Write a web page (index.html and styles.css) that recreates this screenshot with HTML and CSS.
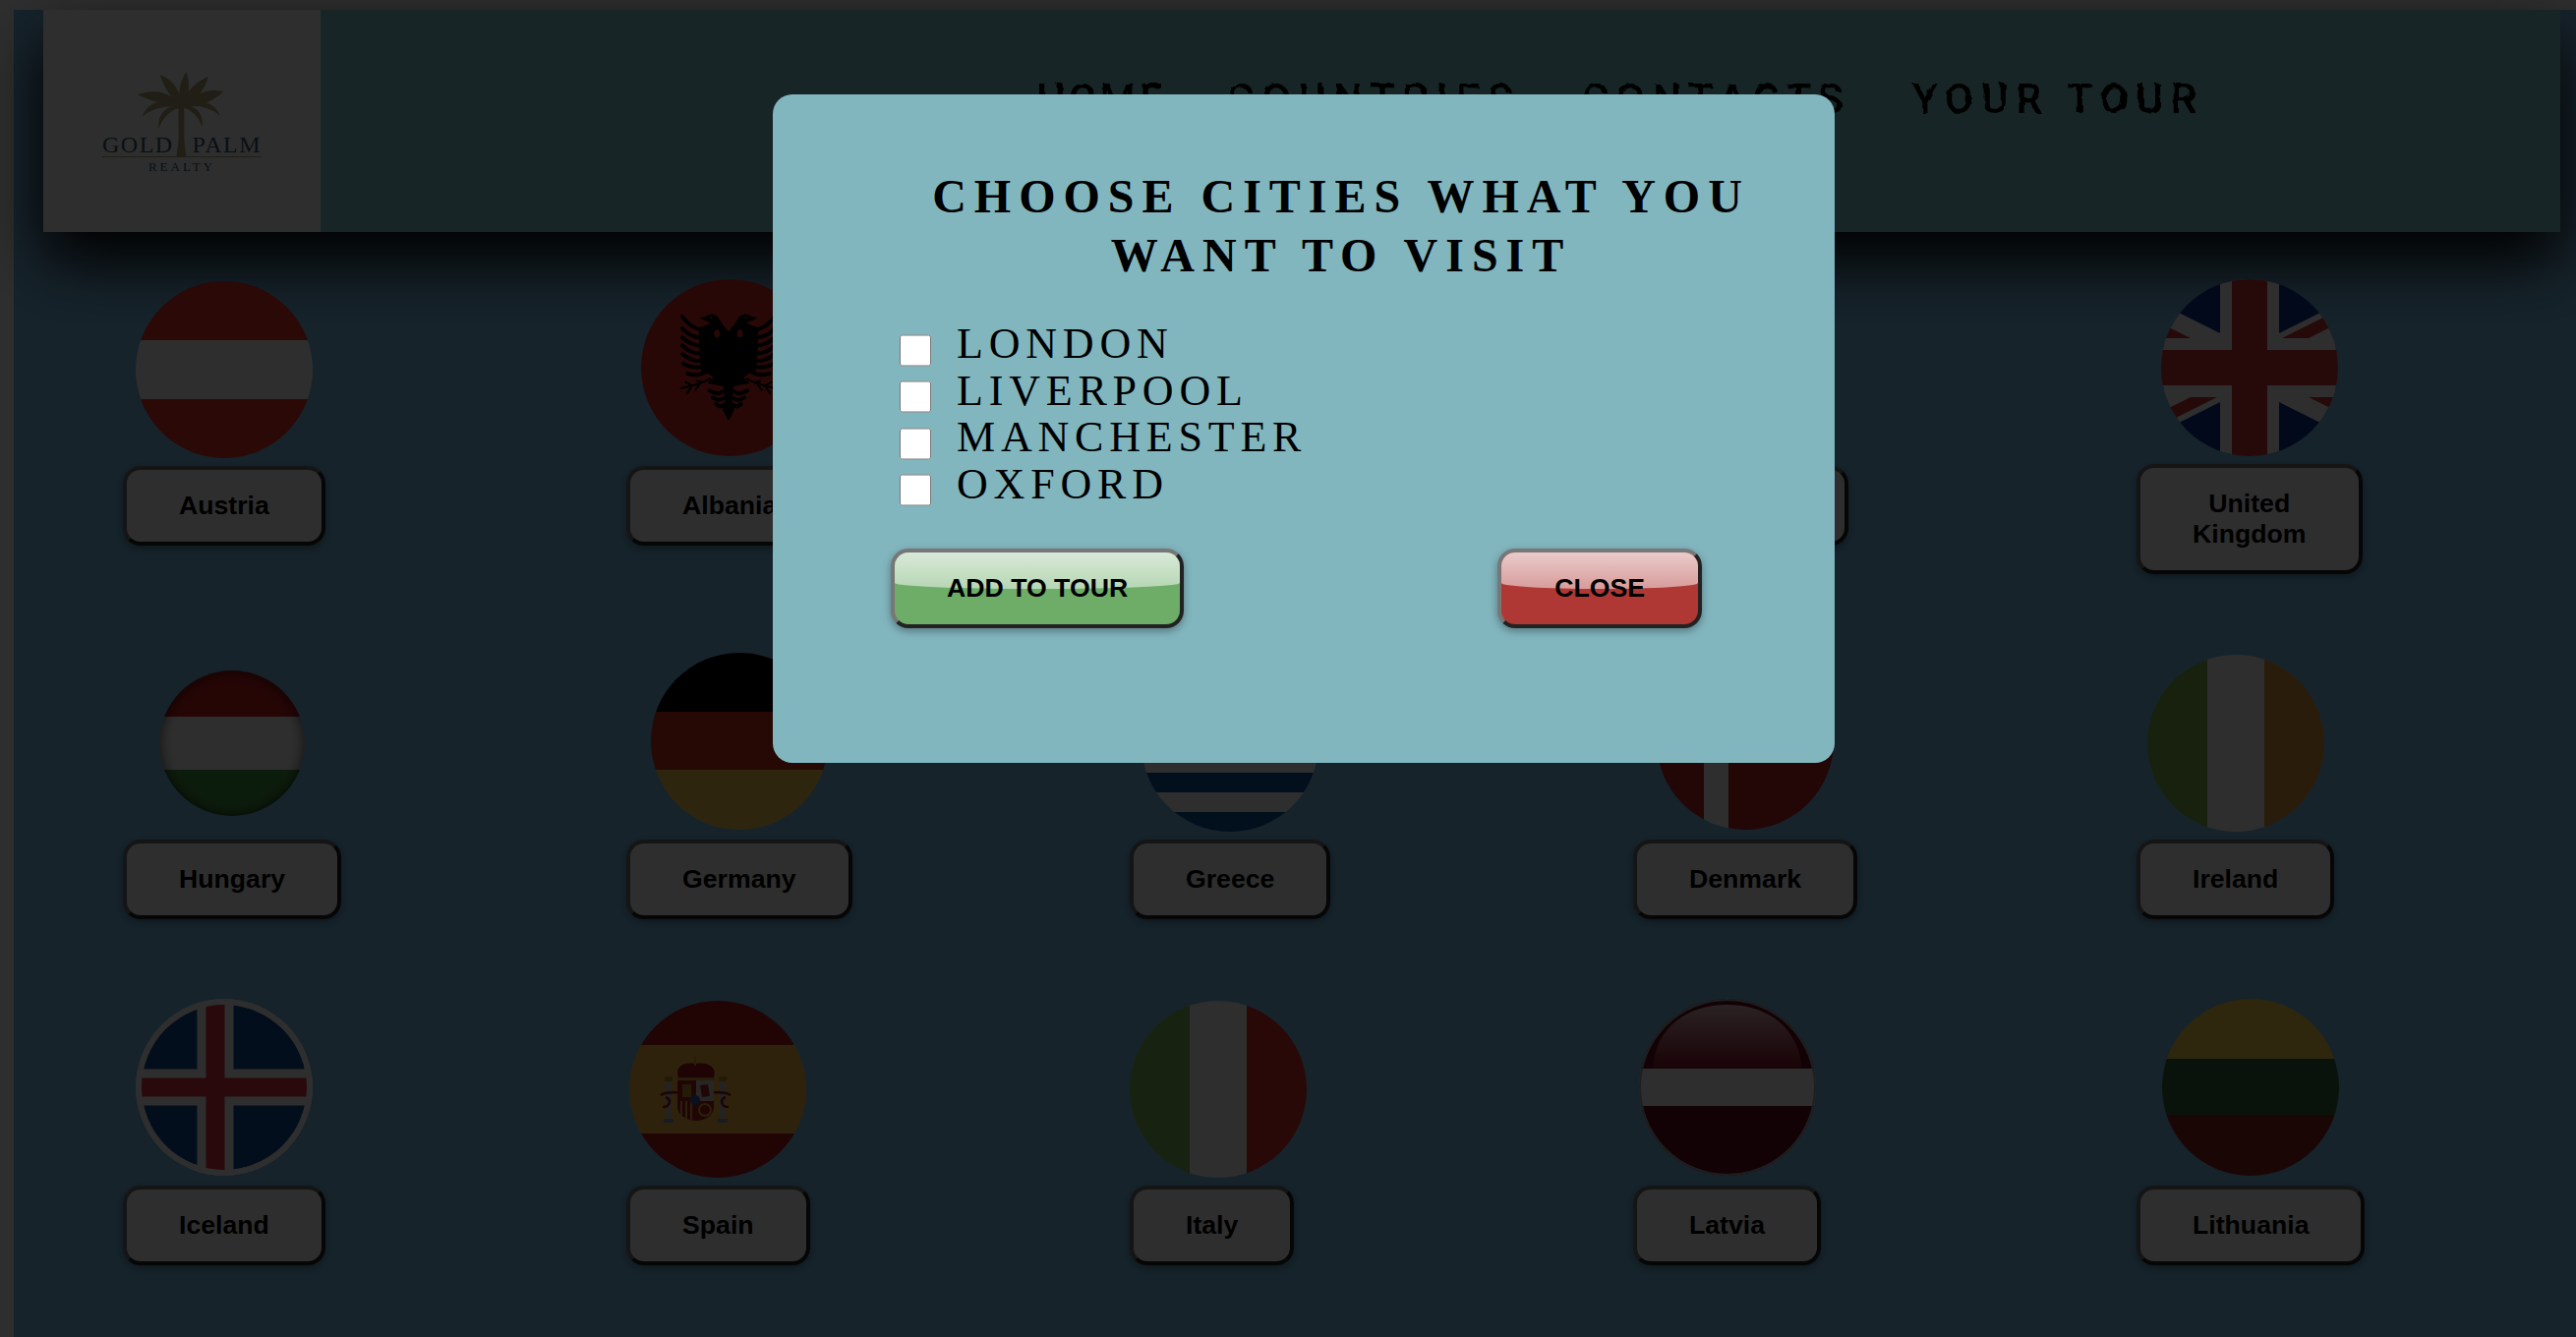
FILE: index.html
```html
<!DOCTYPE html>
<html lang="en">
<head>
    <meta charset="UTF-8">
    <meta name="viewport" content="width=device-width, initial-scale=1.0">
    <title>Choose cities</title>
    <link rel="stylesheet" href="styles.css">
</head>
<body>
    <svg class="defs" width="0" height="0">
        <filter id="rough" x="-5%" y="-20%" width="110%" height="140%">
            <feTurbulence type="fractalNoise" baseFrequency="0.09" numOctaves="2" seed="4"/>
            <feDisplacementMap in="SourceGraphic" scale="5"/>
        </filter>
        <clipPath id="pinwheel"><path d="M30,15 h30 v15 z v15 h-30 z h-30 v-15 z v-15 h30 z"/></clipPath>
        <linearGradient id="latvia-gloss" x1="0" y1="0" x2="0" y2="1">
            <stop offset="0" stop-color="#e8b8c0"/>
            <stop offset="1" stop-color="#8c1428"/>
        </linearGradient>
    </svg>

    <div class="page">
        <header class="header">
            <div class="logo">
                <div class="logo-mark">
                    <svg class="palm" viewBox="0 0 330 300">
                        <path class="palm-trunk" d="M154 125 L172 125 L172 230 L178 285 L148 285 L155 230 Z"/>
                        <g class="palm-fronds">
                            <path d="M165 132 C150 95 158 55 178 24 C192 60 188 100 165 132 Z"/>
                            <path d="M165 132 C135 110 112 75 98 34 C140 48 162 85 165 132 Z"/>
                            <path d="M165 132 C172 90 200 58 246 38 C234 82 205 115 165 132 Z"/>
                            <path d="M165 132 C120 125 70 115 30 94 C85 72 140 90 165 132 Z"/>
                            <path d="M165 132 C200 88 250 74 292 84 C260 118 210 132 165 132 Z"/>
                            <path d="M165 132 C120 125 75 135 45 160 C60 112 125 98 165 132 Z"/>
                            <path d="M165 132 C205 122 250 130 282 158 C262 112 205 100 165 132 Z"/>
                            <path d="M165 132 C130 140 105 165 95 198 C88 150 125 118 165 132 Z"/>
                            <path d="M165 132 C195 140 218 162 226 192 C236 150 200 118 165 132 Z"/>
                        </g>
                    </svg>
                    <div class="logo-words"><span>GOLD</span><span>PALM</span></div>
                    <div class="logo-sub">REALTY</div>
                </div>
            </div>
            <nav class="nav">
                <a>HOME</a>
                <a>COUNTRIES</a>
                <a>CONTACTS</a>
                <a>YOUR TOUR</a>
            </nav>
        </header>

        <main class="countries">
            <div class="card">
                <div class="flag-slot"><div class="flag low flag-austria"></div></div>
                <div class="btn">Austria</div>
            </div>
            <div class="card">
                <div class="flag-slot">
                    <div class="flag flag-albania">
                        <svg viewBox="0 0 180 180">
                            <g id="eagle-half" transform="translate(28 26) scale(0.3333)">
                                <path class="eagle" d="M183 355 L165 320 L172 300 L168 250 L150 245 L118 240 L138 222 L120 210 L100 205 L95 150 L92 70 L115 62 L128 55 L110 48 L95 40 L112 36 L130 28 L148 34 L165 60 L183 82 Z"/>
                                <ellipse class="eagle-cut" cx="148" cy="88" rx="9" ry="12"/>
                                <circle class="eagle-cut" cx="130" cy="40" r="3"/>
                                <path class="feather" d="M100 78 C80 72 58 60 42 36"/>
                                <path class="feather" d="M100 100 C75 100 58 90 42 72"/>
                                <path class="feather" d="M100 125 C75 125 58 115 42 100"/>
                                <path class="feather" d="M100 148 C75 150 58 140 42 124"/>
                                <path class="feather" d="M100 170 C78 175 60 165 42 150"/>
                                <path class="feather" d="M105 188 C85 195 65 190 45 180"/>
                                <path class="feather" d="M118 200 C105 212 85 218 58 210"/>
                                <path class="feather" d="M165 265 C150 275 140 270 125 262"/>
                                <path class="feather" d="M168 285 C155 295 145 290 135 283"/>
                                <path class="feather" d="M170 305 C160 315 152 310 145 303"/>
                                <path class="branch" d="M130 225 C100 240 70 250 35 255 M75 248 L50 235 M70 252 L55 272 M105 238 L85 232 M95 243 L80 262"/>
                            </g>
                            <use href="#eagle-half" transform="matrix(-1 0 0 1 178 0)"/>
                        </svg>
                    </div>
                </div>
                <div class="btn">Albania</div>
            </div>
            <!-- this one sits fully behind the modal -->
            <div class="card"></div>
            <div class="card">
                <div class="btn btn-covered"></div>
            </div>
            <div class="card">
                <div class="flag-slot">
                    <div class="flag">
                        <svg viewBox="15 0 30 30">
                            <rect width="60" height="30" fill="#0f3291"/>
                            <path d="M0,0 L60,30 M60,0 L0,30" stroke="#fff" stroke-width="6"/>
                            <path d="M0,0 L60,30 M60,0 L0,30" clip-path="url(#pinwheel)" stroke="#d23232" stroke-width="4"/>
                            <path d="M30,0 V30 M0,15 H60" stroke="#fff" stroke-width="10"/>
                            <path d="M30,0 V30 M0,15 H60" stroke="#d23232" stroke-width="6"/>
                        </svg>
                    </div>
                </div>
                <div class="btn">United<br>Kingdom</div>
            </div>

            <div class="card">
                <div class="flag-slot"><div class="flag flag-small flag-hungary"></div></div>
                <div class="btn">Hungary</div>
            </div>
            <div class="card">
                <div class="flag-slot"><div class="flag flag-germany"></div></div>
                <div class="btn">Germany</div>
            </div>
            <div class="card">
                <div class="flag-slot"><div class="flag low flag-greece"></div></div>
                <div class="btn">Greece</div>
            </div>
            <div class="card">
                <div class="flag-slot"><div class="flag flag-denmark"></div></div>
                <div class="btn">Denmark</div>
            </div>
            <div class="card">
                <div class="flag-slot"><div class="flag low flag-ireland"></div></div>
                <div class="btn">Ireland</div>
            </div>

            <div class="card">
                <div class="flag-slot">
                    <div class="flag">
                        <svg viewBox="0 0 180 180">
                            <circle cx="90" cy="90" r="90" fill="#fff"/>
                            <circle cx="90" cy="90" r="84" fill="#14509a"/>
                            <path d="M81 0 V180 M0 90 H180" stroke="#fff" stroke-width="37"/>
                            <path d="M81 6 V174 M6 90 H174" stroke="#e63246" stroke-width="19"/>
                            <circle cx="90" cy="90" r="87" fill="none" stroke="#fff" stroke-width="6"/>
                        </svg>
                    </div>
                </div>
                <div class="btn">Iceland</div>
            </div>
            <div class="card">
                <div class="flag-slot">
                    <div class="flag low flag-spain">
                        <svg viewBox="0 0 180 180">
                            <rect x="37" y="82" width="6" height="38" fill="#c8c0b4"/>
                            <rect x="92" y="82" width="6" height="38" fill="#c8c0b4"/>
                            <rect x="35" y="120" width="10" height="4" fill="#7f9fc0"/>
                            <rect x="90" y="120" width="10" height="4" fill="#7f9fc0"/>
                            <rect x="36" y="77" width="8" height="5" fill="#c89030"/>
                            <rect x="91" y="77" width="8" height="5" fill="#c89030"/>
                            <path d="M32 96 C38 92 44 94 49 93 M34 108 C42 108 43 100 37 98 M103 96 C97 92 91 94 86 93 M101 108 C93 108 92 100 98 98" fill="none" stroke="#a01818" stroke-width="2.5"/>
                            <path d="M49 81 H68 V102 H86 V108 C86 116 78 122 68 122 C58 122 49 116 49 108 Z" fill="#b81c1c"/>
                            <rect x="68" y="81" width="18" height="21" fill="#d8d0c8"/>
                            <path d="M72 86 L80 85 L82 97 L74 98 Z" fill="#b02828"/>
                            <path d="M53 102 V118 M58 102 V120 M63 102 V121" stroke="#e0b038" stroke-width="2"/>
                            <rect x="54" y="85" width="9" height="13" fill="#c89030"/>
                            <circle cx="67" cy="101" r="5" fill="#3a5ea8"/>
                            <circle cx="77" cy="111" r="6" fill="none" stroke="#e0b038" stroke-width="2"/>
                            <path d="M50 78 C46 66 56 62 67 64 C78 62 90 66 86 78 Z" fill="#a81818"/>
                            <path d="M49 78 H87 V81 H49 Z" fill="#d0a038"/>
                            <path d="M67 57 V66" stroke="#d0a038" stroke-width="2"/>
                        </svg>
                    </div>
                </div>
                <div class="btn">Spain</div>
            </div>
            <div class="card card-left">
                <div class="flag-slot"><div class="flag low flag-italy"></div></div>
                <div class="btn">Italy</div>
            </div>
            <div class="card">
                <div class="flag-slot">
                    <div class="flag flag-latvia">
                        <svg viewBox="0 0 180 180">
                            <circle cx="90" cy="90" r="90" fill="#640e1c"/>
                            <path d="M14 71 C16 30 48 6 90 6 C132 6 162 30 166 71 Z" fill="url(#latvia-gloss)"/>
                            <rect y="71" width="180" height="38" fill="#fff"/>
                            <circle cx="90" cy="90" r="89" fill="none" stroke="#b0a8a8" stroke-width="2"/>
                        </svg>
                    </div>
                </div>
                <div class="btn">Latvia</div>
            </div>
            <div class="card">
                <div class="flag-slot"><div class="flag flag-lithuania"></div></div>
                <div class="btn">Lithuania</div>
            </div>
        </main>
    </div>

    <div class="overlay"></div>

    <div class="modal">
        <h2>CHOOSE CITIES WHAT YOU<br>WANT TO VISIT</h2>
        <div class="cities">
            <label class="city"><input type="checkbox"><span>LONDON</span></label>
            <label class="city"><input type="checkbox"><span>LIVERPOOL</span></label>
            <label class="city"><input type="checkbox"><span>MANCHESTER</span></label>
            <label class="city"><input type="checkbox"><span>OXFORD</span></label>
        </div>
        <div class="actions">
            <button class="btn gloss gloss-green"><span>ADD TO TOUR</span></button>
            <button class="btn gloss gloss-red"><span>CLOSE</span></button>
        </div>
    </div>
</body>
</html>
```

FILE: styles.css
```css
* {
    box-sizing: border-box;
}

html, body {
    height: 100%;
}

body {
    margin: 0;
    padding: 10px 0 0 14px;
    background: #ffffff;
    font-family: "Liberation Sans", Arial, sans-serif;
    color: #000000;
    overflow: hidden;
}

.defs {
    position: absolute;
}

.page {
    height: 100%;
    background: #7cc2ee;
}

.header {
    display: flex;
    height: 226px;
    margin: 0 16px 0 30px;
    background: #80ccd0;
    box-shadow: 0 30px 60px #000000;
}

.logo {
    width: 282px;
    background: #ffffff;
    padding: 55px 0 0 60px;
}

.logo-mark {
    width: 162px;
}

.palm {
    display: block;
    width: 110px;
    height: 100px;
    margin: 0 0 -30px 26px;
}

.palm-trunk,
.palm-fronds {
    fill: #b8a47c;
}

.logo-words {
    display: flex;
    justify-content: space-between;
    border-bottom: 1px solid #b8a47c;
    font-family: "Liberation Serif", serif;
    font-size: 24px;
    line-height: 24px;
    letter-spacing: 1.5px;
    color: #305870;
}

.logo-sub {
    margin-top: 2px;
    text-align: center;
    font-family: "Liberation Serif", serif;
    font-size: 13px;
    line-height: 16px;
    letter-spacing: 3px;
    color: #305870;
}

.nav {
    display: flex;
    gap: 63px;
    padding: 67px 0 0 728px;
    font-family: "Roboto", sans-serif;
    font-size: 42px;
    font-weight: 500;
    line-height: 48px;
    letter-spacing: 8px;
    filter: url(#rough);
}

.nav a:first-child {
    letter-spacing: 3px;
}

.nav a:nth-child(3) {
    letter-spacing: 7.3px;
}

.countries {
    display: grid;
    grid-template-columns: repeat(5, 512px);
    grid-template-rows: 300px 272px auto;
    row-gap: 80px;
    margin: 48px 0 0 111px;
}

.card {
    justify-self: start;
    display: flex;
    flex-direction: column;
    align-items: center;
}

.card-left {
    align-items: flex-start;
}

.flag-slot {
    height: 182px;
    margin-bottom: 8px;
}

.flag {
    width: 180px;
    height: 180px;
    border-radius: 50%;
    overflow: hidden;
}

.flag svg {
    display: block;
    width: 100%;
    height: 100%;
}

.flag.low {
    margin-top: 2px;
}

.flag-small {
    width: 148px;
    height: 148px;
    margin-top: 18px;
    box-shadow: inset 0 0 14px rgba(0, 0, 0, 0.7);
}

.flag-austria {
    background: linear-gradient(#e73228 33.3%, #ffffff 33.3% 66.6%, #e73228 66.6%);
}

.flag-albania {
    background: #dc2d23;
}

.eagle {
    fill: #000000;
}

.eagle-cut {
    fill: #dc2d23;
}

.feather {
    fill: none;
    stroke: #000000;
    stroke-width: 12;
    stroke-linecap: round;
}

.branch {
    fill: none;
    stroke: #000000;
    stroke-width: 6;
}

.flag-hungary {
    background: linear-gradient(#d02020 32%, #ffffff 32% 68%, #469b46 68%);
}

.flag-germany {
    background: linear-gradient(#000000 33.3%, #d32f1f 33.3% 66%, #ffce4d 66%);
}

.flag-greece {
    background: repeating-linear-gradient(#0f5599 0 20px, #ffffff 20px 40px);
}

.flag-denmark {
    background:
        linear-gradient(90deg, transparent 48px, #ffffff 48px 73px, transparent 73px),
        #c32323;
}

.flag-ireland {
    background: linear-gradient(90deg, #82b950 34%, #ffffff 34% 66%, #e69b3c 66%);
}

.flag-spain {
    background: linear-gradient(#b41919 25%, #ffbe46 25% 75%, #b41919 75%);
}

.flag-italy {
    background: linear-gradient(90deg, #82be5a 34%, #ffffff 34% 66%, #dc3228 66%);
}

.flag-lithuania {
    background: linear-gradient(#ffd247 33.9%, #326a3c 33.9% 65.5%, #962323 65.5%);
}

.btn {
    position: relative;
    padding: 21px 53px;
    border: 4px solid;
    border-color: #777777 #222222 #222222 #777777;
    border-radius: 18px;
    background: #ffffff;
    box-shadow: 0 3px 8px rgba(0, 0, 0, 0.35);
    font-family: "Liberation Sans", Arial, sans-serif;
    font-size: 26.67px;
    font-weight: bold;
    line-height: 31px;
    text-align: center;
    color: #000000;
}

.btn-covered {
    width: 219px;
    height: 81px;
    margin-top: 190px;
}

.overlay {
    position: fixed;
    inset: 0;
    background: rgba(0, 0, 0, 0.82);
}

.modal {
    position: fixed;
    left: 786px;
    top: 96px;
    width: 1080px;
    height: 680px;
    padding: 74px 0 0 120px;
    border-radius: 20px;
    background: #82b6bf;
}

.modal h2 {
    width: 900px;
    margin: 0 0 36px 8px;
    font-family: "Liberation Serif", serif;
    font-size: 48px;
    font-weight: bold;
    line-height: 60px;
    letter-spacing: 8px;
    text-align: center;
}

.city {
    display: flex;
    align-items: center;
    gap: 26px;
    height: 47.5px;
    padding-left: 9px;
    font-family: "Liberation Serif", serif;
    font-size: 44px;
    letter-spacing: 5.8px;
}

.city input {
    width: 32px;
    height: 33px;
    margin: 13px 0 0;
}

.actions {
    display: flex;
    justify-content: space-between;
    width: 825px;
    margin-top: 42px;
}

.gloss {
    overflow: hidden;
}

.gloss span {
    position: relative;
}

.gloss::before {
    content: "";
    position: absolute;
    top: 0;
    left: 0;
    right: 0;
    height: 37px;
    border-radius: 0 0 50% 50% / 0 0 6px 6px;
    background: linear-gradient(rgba(255, 255, 255, 0.74), rgba(255, 255, 255, 0.5));
}

.gloss-green {
    background: #6dad68;
}

.gloss-red {
    padding-left: 54px;
    padding-right: 54px;
    background: #af3835;
}
```
